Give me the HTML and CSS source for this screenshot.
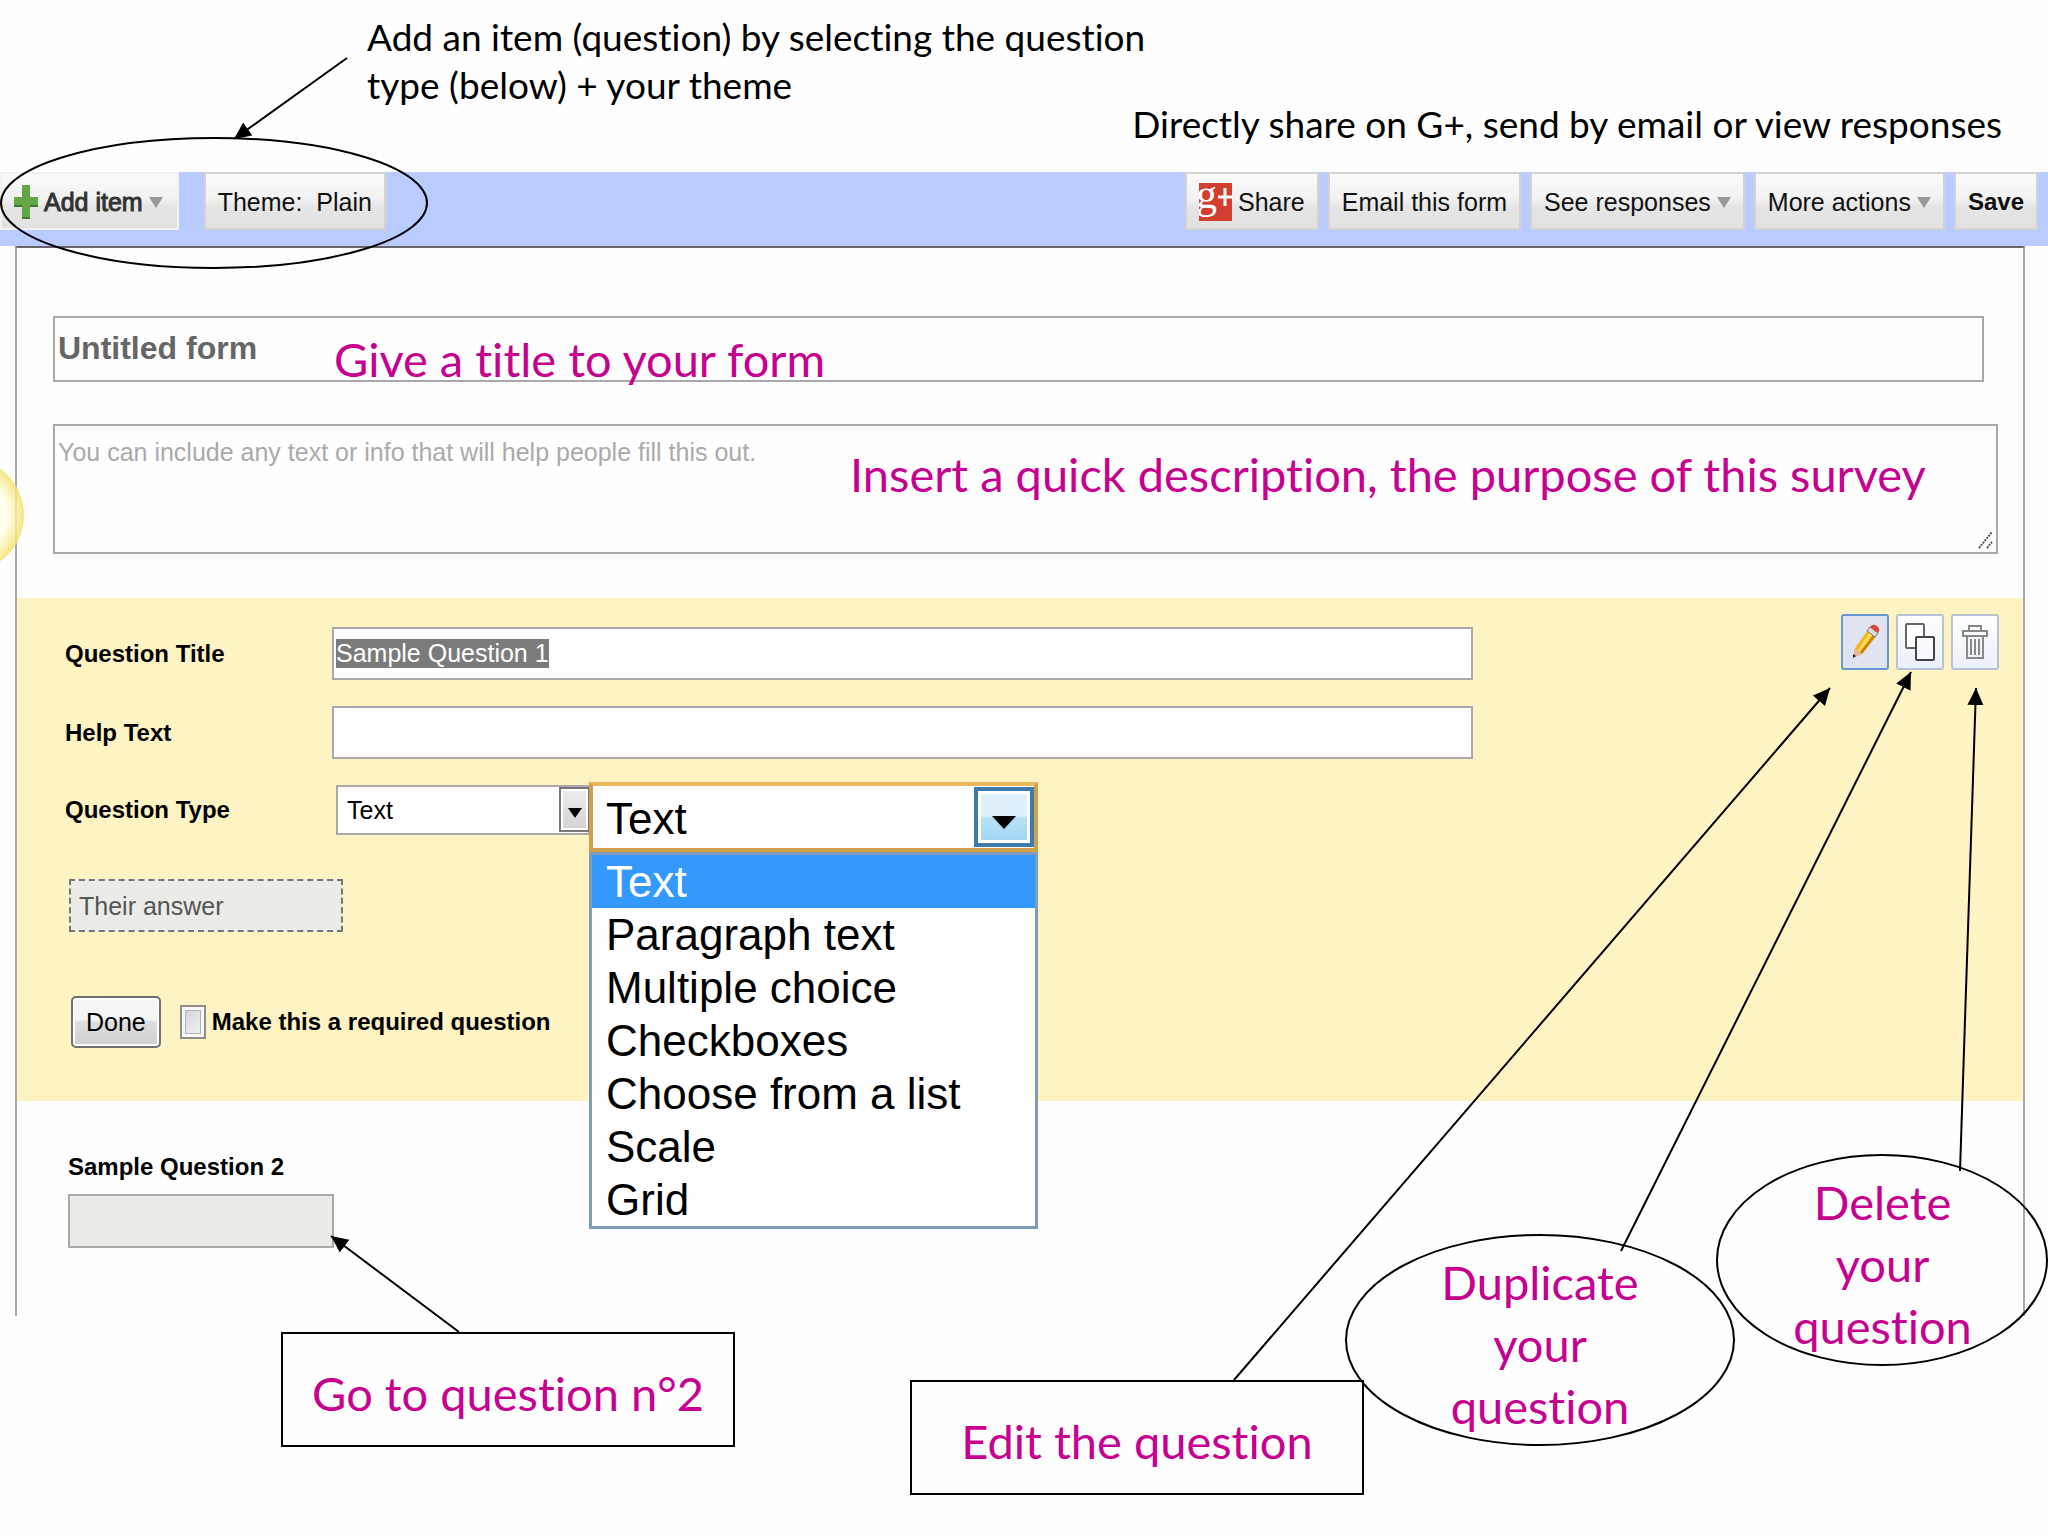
FILE: index.html
```html
<!DOCTYPE html>
<html lang="en">
<head>
  <meta charset="UTF-8"/>
  <meta name="viewport" content="width=device-width, initial-scale=1.0"/>
  <title>Edit form</title>
  <link rel="stylesheet" href="styles.css">
</head>
<body>

  <header class="intro">
    <p class="intro-add">Add an item (question) by selecting the question<br>type (below) + your theme</p>
    <p class="intro-share">Directly share on G+, send by email or view responses</p>
  </header>

  <nav class="toolbar">
    <button class="tool-button add-item" type="button">
      <svg class="plus" viewBox="0 0 24 34" aria-hidden="true">
        <path d="M8 0h8v12h8v10h-8v12H8V22H0V12h8z" fill="#64a544"/>
        <path d="M0 20h8v2H0zM16 20h8v2h-8zM8 32h8v2H8z" fill="#3f7a2a"/>
      </svg>
      Add item <span class="caret"></span>
    </button>
    <button class="tool-button theme" type="button">Theme:&nbsp; Plain</button>
    <div class="toolbar-right">
      <button class="tool-button" type="button">
        <svg class="gplus" viewBox="0 0 33 38" aria-hidden="true">
          <rect width="33" height="38" fill="#d23f31"/>
          <text x="-3" y="25" fill="#fff" font-family="Liberation Serif, serif" font-size="42">g</text>
          <path d="M19 14h14M26 5v18" stroke="#fff" stroke-width="3"/>
        </svg>
        Share
      </button>
      <button class="tool-button" type="button">Email this form</button>
      <button class="tool-button" type="button">See responses <span class="caret"></span></button>
      <button class="tool-button" type="button">More actions <span class="caret"></span></button>
      <button class="tool-button save" type="button">Save</button>
    </div>
  </nav>

  <form class="form">
    <input class="form-title" type="text" value="Untitled form" aria-label="Form title">
    <textarea class="form-description" aria-label="Form description" placeholder="You can include any text or info that will help people fill this out."></textarea>

    <section class="question">
      <div class="fields">
        <label for="question-title">Question Title</label>
        <input id="question-title" class="field" type="text" value="Sample Question 1">

        <label for="help-text">Help Text</label>
        <input id="help-text" class="field" type="text">

        <label for="question-type">Question Type</label>
        <div class="type">
          <select id="question-type" class="type-select">
            <option>Text</option>
          </select>
          <span class="type-arrow"></span>

          <div class="popup">
            <div class="popup-head">
              <select class="popup-select" aria-label="Selected type">
                <option>Text</option>
              </select>
              <span class="popup-arrow"></span>
            </div>
            <ul class="popup-list">
              <li class="active">Text</li>
              <li>Paragraph text</li>
              <li>Multiple choice</li>
              <li>Checkboxes</li>
              <li>Choose from a list</li>
              <li>Scale</li>
              <li>Grid</li>
            </ul>
          </div>
        </div>

        <div class="answer">Their answer</div>

        <div class="finish">
          <button class="done" type="button">Done</button>
          <input id="required" class="required" type="checkbox">
          <label for="required">Make this a required question</label>
        </div>
      </div>

      <div class="actions">
        <button class="action selected" type="button" aria-label="Edit">
          <svg viewBox="0 0 30 36">
            <path d="M3 34L5 24L18 6L26 12L12 30z" fill="#f3b61f"/>
            <path d="M8 26L20 8L23 10L10 28z" fill="#ffdc55"/>
            <path d="M12 30L26 12L24 10L10 28z" fill="#c98208"/>
            <path d="M3 34L5 24L12 30z" fill="#e8b997"/>
            <path d="M3 34L3 30L6 32z" fill="#222"/>
            <path d="M17 7L20 3L28 9L25 13z" fill="#dcdcdc" stroke="#777" stroke-width="1"/>
            <path d="M20 3Q23 -1 27 2Q31 5 28 9z" fill="#e0483c"/>
          </svg>
        </button>
        <button class="action duplicate" type="button" aria-label="Duplicate">
          <svg viewBox="0 0 32 40">
            <rect x="2" y="2" width="18" height="24" rx="1" fill="#fff" stroke="#666" stroke-width="2"/>
            <rect x="12" y="15" width="18" height="23" rx="1" fill="#f7f9ff" stroke="#444" stroke-width="2"/>
          </svg>
        </button>
        <button class="action" type="button" aria-label="Delete">
          <svg viewBox="0 0 28 36" fill="none" stroke="#888" stroke-width="2">
            <path d="M8 7V2H20V7M2 7H26V12H2zM6 12V34H22V12M10 15V31M14 15V31M18 15V31"/>
          </svg>
        </button>
      </div>
    </section>

    <section class="question-two">
      <label for="answer-two">Sample Question 2</label>
      <input id="answer-two" class="answer-two" type="text" disabled>
    </section>
  </form>

  <!-- Notes laid over the form -->
  <div class="notes">
    <div class="bulb"></div>
    <svg class="lines" width="2048" height="1536" viewBox="0 0 2048 1536" aria-hidden="true">
      <defs>
        <marker id="arrow" markerUnits="userSpaceOnUse" markerWidth="18" markerHeight="18" refX="17" refY="9" orient="auto">
          <path d="M0 1L17 9L0 17z" fill="#000"/>
        </marker>
      </defs>
      <g fill="none" stroke="#000" stroke-width="2">
        <ellipse cx="214" cy="203" rx="213" ry="65"/>
        <ellipse cx="1540" cy="1340" rx="194" ry="105"/>
        <ellipse cx="1882" cy="1260" rx="165" ry="105"/>
        <g marker-end="url(#arrow)">
          <path d="M347 58L234 139"/>
          <path d="M459 1332L331 1236"/>
          <path d="M1234 1380L1830 688"/>
          <path d="M1621 1251L1911 672"/>
          <path d="M1960 1171L1976 688"/>
        </g>
      </g>
    </svg>
    <p class="note note-title">Give a title to your form</p>
    <p class="note note-description">Insert a quick description, the purpose of this survey</p>
    <p class="note note-box note-next">Go to question n°2</p>
    <p class="note note-box note-edit">Edit the question</p>
    <p class="note note-duplicate">Duplicate<br>your<br>question</p>
    <p class="note note-delete">Delete<br>your<br>question</p>
  </div>

  <script>
    // the first question opens with its title selected
    const title = document.getElementById("question-title");
    title.focus();
    title.select();
  </script>

</body>
</html>
```
FILE: styles.css
```css
* {
  box-sizing: border-box;
  margin: 0;
  padding: 0;
}

body {
  position: relative;
  min-height: 100vh;
  overflow: hidden;
  background: #fefefe;
  color: #000;
  font-family: "Liberation Sans", Arial, sans-serif;
  font-size: 25px;
}

input,
select,
textarea,
button {
  font: inherit;
  color: inherit;
  border-radius: 0;
  outline: none;
}

/* Text above the toolbar */
.intro {
  display: flex;
  justify-content: space-between;
  align-items: flex-end;
  height: 172px;
  padding: 0 46px 0 367px;
  font-family: Lato, sans-serif;
  font-size: 37px;
  line-height: 48px;
  font-variant-ligatures: none;
}

.intro-add {
  align-self: flex-start;
  padding-top: 13px;
  white-space: nowrap;
}

.intro-share {
  flex: none;
  margin-left: -100px;
  padding-bottom: 24px;
}

/* Toolbar */
.toolbar {
  display: flex;
  align-items: flex-start;
  height: 74px;
  padding-right: 10px;
  background: #bacbff;
}

.toolbar-right {
  display: flex;
  gap: 9px;
  margin-left: auto;
}

.tool-button {
  display: flex;
  align-items: center;
  height: 58px;
  padding: 2px 12px 0;
  border: 2px solid #d3d3d3;
  background: linear-gradient(#fafafa, #f2f2f2 45%, #e6e6e6 60%, #e1e1e1);
  color: #111;
  white-space: nowrap;
}

.add-item {
  padding-right: 14px;
  border-color: #f2f2f2;
  -webkit-text-stroke: 1px #333;
  color: #333;
}

.theme {
  margin-left: 25px;
}

.save {
  font-size: 24px;
  font-weight: 700;
}

.plus {
  width: 24px;
  height: 34px;
  margin-right: 6px;
}

.caret {
  margin-left: 6px;
  border: 7px solid transparent;
  border-top: 11px solid #999;
  border-bottom: 0;
}

.gplus {
  width: 33px;
  height: 38px;
  margin-right: 6px;
}

/* Form sheet */
.form {
  height: 1070px;
  margin: 0 23px 0 15px;
  padding-top: 68px;
  border: 2px solid #aaa8ad;
  border-top-color: #66666c;
  border-bottom: 0;
}

.form-title,
.form-description {
  display: block;
  width: calc(100% - 75px);
  margin-left: 36px;
  border: 2px solid #a9a9ad;
  background: transparent;
}

.form-title {
  height: 66px;
  padding: 0 3px 2px;
  color: #666;
  font-size: 32px;
  font-weight: 700;
}

.form-description {
  width: calc(100% - 61px);
  height: 130px;
  margin-top: 42px;
  padding: 8px 3px;
  background: url("data:image/svg+xml,%3Csvg xmlns='http://www.w3.org/2000/svg' width='16' height='18'%3E%3Cpath d='M1 17L14 1M9 17L14 11' stroke='%23555' stroke-width='2' stroke-dasharray='2 1'/%3E%3C/svg%3E") no-repeat right 2px bottom 3px;
  line-height: 36px;
  resize: none;
}

.form-description::placeholder {
  color: #aaa;
}

.question {
  display: flex;
  justify-content: space-between;
  align-items: flex-start;
  height: 503px;
  margin-top: 44px;
  padding: 16px 24px 0 48px;
  background: #fef3c2;
}

.fields {
  display: grid;
  grid-template-columns: 267px 1fr;
  row-gap: 26px;
  align-items: center;
  width: 73%;
  padding: 13px 4px 0 0;
}

.fields label,
.question-two label {
  font-size: 24px;
  font-weight: 700;
}

.field {
  width: 100%;
  height: 53px;
  padding: 0 2px;
  border: 2px solid #a9a9ad;
  background: #fff;
  line-height: 38px;
}

.field::selection {
  background: #7b7b7b;
  color: #fff;
}

.type {
  position: relative;
  width: 254px;
  height: 50px;
  margin-left: 4px;
}

.type-select {
  width: 100%;
  height: 50px;
  padding: 0 9px;
  border: 2px solid #a9a9ad;
  background: #fff;
  appearance: none;
}

.type-arrow {
  position: absolute;
  top: 2px;
  right: 0;
  width: 31px;
  height: 45px;
  border: 2px solid #77777c;
  box-shadow: inset 0 0 0 2px #fff;
  background: linear-gradient(#eee, #d2d2d2);
  pointer-events: none;
}

.type-arrow::after,
.popup-arrow::after {
  content: "";
  position: absolute;
  top: 19px;
  left: 7px;
  border: 7px solid transparent;
  border-top: 10px solid #000;
  border-bottom: 0;
}

/* Open type list */
.popup {
  position: absolute;
  top: -3px;
  left: 253px;
  z-index: 1;
  width: 449px;
  font-size: 44px;
}

.popup-head {
  position: relative;
  height: 70px;
  border: 4px solid #cf9f4c;
  border-top-color: #e9b85c;
}

.popup-select {
  width: 100%;
  height: 62px;
  padding: 2px 13px 0;
  border: 0;
  background: #fff;
  appearance: none;
}

.popup-arrow {
  position: absolute;
  top: 1px;
  right: 0;
  width: 60px;
  height: 60px;
  border: 4px solid #3e7bab;
  box-shadow: inset 0 0 0 3px #fff;
  background: linear-gradient(#dff1fb 48%, #b5dff6 52%, #a2d6f2);
  pointer-events: none;
}

.popup-arrow::after {
  top: 25px;
  left: 14px;
  border-width: 13px 12px 0;
}

.popup-list {
  border: 3px solid #7f9db9;
  background: #fff;
  list-style: none;
}

.popup-list li {
  padding-left: 14px;
  line-height: 53px;
}

.popup-list .active {
  background: #3399ff;
  color: #fff;
}

.answer {
  grid-column: 1 / -1;
  width: 274px;
  height: 53px;
  margin: 18px 0 0 4px;
  padding-left: 8px;
  border: 2px dashed #77776f;
  background: #ebebe7;
  color: #555;
  line-height: 51px;
}

.finish {
  grid-column: 1 / -1;
  display: flex;
  align-items: center;
  margin: 38px 0 0 6px;
}

.done {
  height: 52px;
  padding: 0 13px;
  border: 2px solid #707070;
  border-radius: 5px;
  box-shadow: inset 0 0 0 2px #fff;
  background: linear-gradient(#f4f4f4 45%, #dedee0 50%, #cfcfd2);
}

.required {
  width: 26px;
  height: 34px;
  margin: 0 6px 0 19px;
  border: 2px solid #8e8f8f;
  box-shadow: inset 0 0 0 3px #f8f8f8, inset 0 0 0 4px #b0b4b8;
  background: linear-gradient(135deg, #ccd0d5, #f8f8f8);
  appearance: none;
}

.actions {
  display: flex;
  gap: 7px;
}

.action {
  display: flex;
  align-items: center;
  justify-content: center;
  width: 48px;
  height: 56px;
  border: 2px solid #b9c2d4;
  border-radius: 3px;
  background: linear-gradient(#fff, #e9effc);
}

.action svg {
  flex: none;
  height: 36px;
}

.duplicate svg {
  height: 40px;
}

.action.selected {
  border-color: #6a96d2;
  background: #dfe4f0;
}

.question-two {
  display: flex;
  flex-direction: column;
  gap: 9px;
  padding: 48px 51px 0;
}

.question-two label {
  line-height: 36px;
}

.answer-two {
  width: 266px;
  height: 54px;
  border: 2px solid #a9a9a9;
  background: #ebeae7;
}

/* Notes */
.notes {
  position: absolute;
  inset: 0;
  z-index: 2;
  overflow: hidden;
  pointer-events: none;
}

.lines {
  position: absolute;
  top: 0;
  left: 0;
}

.bulb {
  position: absolute;
  top: 458px;
  left: -90px;
  width: 114px;
  height: 114px;
  border-radius: 50%;
  background: radial-gradient(circle, rgba(255, 255, 230, 0.8) 50%, rgba(245, 226, 110, 0.85) 70%);
}

.note {
  position: absolute;
  color: #c6008f;
  font-family: Lato, sans-serif;
  font-size: 47px;
  line-height: 62px;
  font-variant-ligatures: none;
  text-align: center;
  white-space: nowrap;
}

.note-title {
  top: 328px;
  left: 334px;
}

.note-description {
  top: 443px;
  left: 850px;
}

.note-box {
  width: 454px;
  height: 115px;
  border: 2px solid #000;
  line-height: 118px;
}

.note-next {
  top: 1332px;
  left: 281px;
}

.note-edit {
  top: 1380px;
  left: 910px;
}

.note-duplicate {
  top: 1251px;
  left: 1346px;
  width: 388px;
}

.note-delete {
  top: 1171px;
  left: 1717px;
  width: 331px;
}
```
